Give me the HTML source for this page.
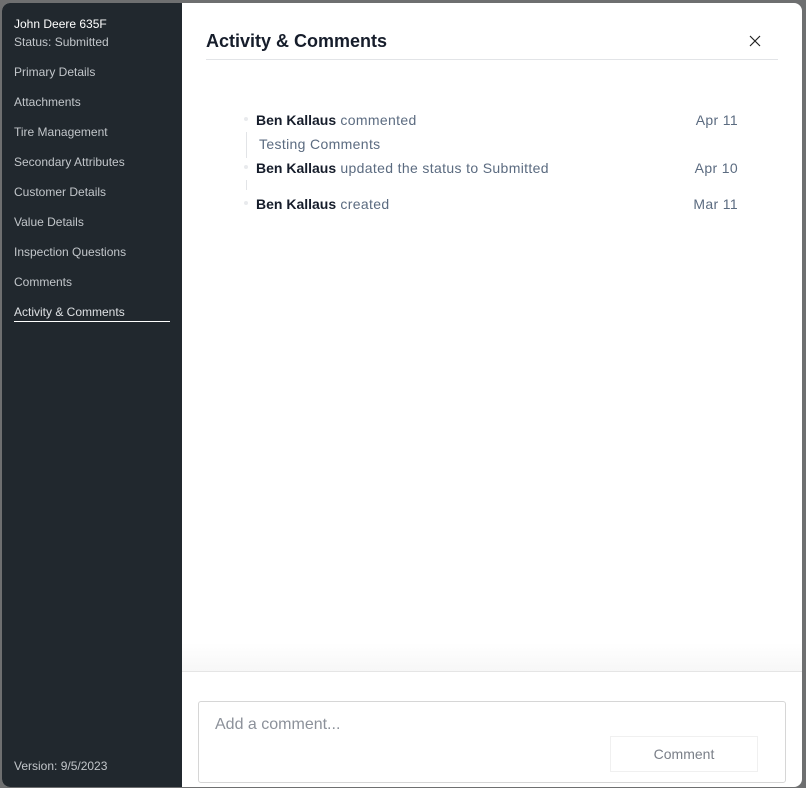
<!DOCTYPE html>
<html><head><style>
body{margin:0;width:806px;height:788px;background:#6e6f70;font-family:"Liberation Sans",sans-serif;position:relative;overflow:hidden}
.modal{position:absolute;left:2px;top:3px;width:800px;height:784px;background:#fff;border-radius:8px;overflow:hidden}
.side{position:absolute;left:0;top:0;width:180px;height:784px;background:#21282e;color:#c2c6ca;font-size:12px}
.side div{position:absolute;left:12px}
.main{position:absolute;left:180px;top:0;right:0;bottom:0}
h1{position:absolute;left:24px;top:28px;margin:0;font-size:18px;font-weight:bold;color:#161d2b}
.hr{position:absolute;left:24px;right:24px;top:56px;height:1px;background:#e2e4e7}
.t{position:absolute;font-size:14px;color:#5b6b80;letter-spacing:0.35px;top:0}
.t b{color:#161d2b;font-weight:bold;letter-spacing:0}
.dot{position:absolute;left:62px;width:4px;height:4px;border-radius:50%;background:#e8eaed}
.vl{position:absolute;left:64px;width:1px;background:#e2e4e7}
.foot{position:absolute;left:0;right:0;top:668px;bottom:0;border-top:1px solid #e5e5e5}
</style></head><body>
<div class="modal">
<div class="side">
<div style="top:14px;color:#fff">John Deere 635F</div>
<div style="top:32px">Status: Submitted</div>
<div style="top:62px">Primary Details</div>
<div style="top:92px">Attachments</div>
<div style="top:122px">Tire Management</div>
<div style="top:152px">Secondary Attributes</div>
<div style="top:182px">Customer Details</div>
<div style="top:212px">Value Details</div>
<div style="top:242px">Inspection Questions</div>
<div style="top:272px">Comments</div>
<div style="top:302px;color:#dde0e3;width:156px;border-bottom:1px solid #fff;padding-bottom:2px">Activity &amp; Comments</div>
<div style="top:756px">Version: 9/5/2023</div>
</div>
<div class="main">
<h1>Activity &amp; Comments</h1>
<svg style="position:absolute;left:567px;top:32px" width="12" height="12"><path d="M1 1L11 11M11 1L1 11" stroke="#222" stroke-width="1.2"/></svg>
<div class="hr"></div>
<div class="dot" style="top:114px"></div>
<div class="t" style="left:74px;top:109px"><b>Ben Kallaus</b> commented</div>
<div class="t" style="right:64px;top:109px">Apr 11</div>
<div class="vl" style="top:129px;height:26px"></div>
<div class="t" style="left:77px;top:133px">Testing Comments</div>
<div class="dot" style="top:162px"></div>
<div class="t" style="left:74px;top:157px"><b>Ben Kallaus</b> updated the status to Submitted</div>
<div class="t" style="right:64px;top:157px">Apr 10</div>
<div class="vl" style="top:177px;height:10px"></div>
<div class="dot" style="top:198px"></div>
<div class="t" style="left:74px;top:193px"><b>Ben Kallaus</b> created</div>
<div class="t" style="right:64px;top:193px">Mar 11</div>
<div style="position:absolute;left:0;right:0;top:640px;height:28px;background:linear-gradient(#fff,#f7f7f7)"></div>
<div class="foot">
<div style="position:absolute;left:16px;top:29px;width:586px;height:80px;border:1px solid #d6d6d6;border-radius:3px">
<div style="position:absolute;left:16px;top:14px;font-size:16px;color:#8c919a">Add a comment...</div>
<div style="position:absolute;left:411px;top:34px;width:146px;height:34px;border:1px solid #f0f0f0;font-size:14px;color:#7a7f88;text-align:center;line-height:34px">Comment</div>
</div>
</div>
</div>
</div>
</body></html>
